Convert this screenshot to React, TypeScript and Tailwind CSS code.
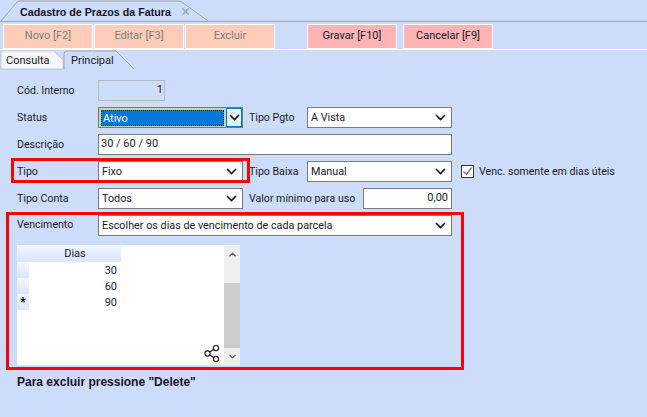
import React from "react";
import { ChevronDown, ChevronUp, X } from "lucide-react";

const Chevron = () => (
  <svg width="11" height="7" viewBox="0 0 11 7" className="shrink-0">
    <path d="M1 1l4.5 4.5L10 1" fill="none" stroke="#111" strokeWidth="1.6" />
  </svg>
);

const Label = ({ children, className = "" }: { children: React.ReactNode; className?: string }) => (
  <span className={`whitespace-nowrap pt-[1px] text-[10.6px] text-[#1a1a2a] ${className}`}>{children}</span>
);

const Select = ({ value, className = "" }: { value: string; className?: string }) => (
  <div className={`flex h-[21px] items-center justify-between border border-[#7a7a7a] bg-white pl-[3px] pr-[5px] ${className}`}>
    <span className="pt-[1px] text-[10.8px] text-[#1a1a2a]">{value}</span>
    <Chevron />
  </div>
);

const ActionButton = ({ label, tone }: { label: string; tone: "off" | "on" }) => (
  <div
    className={
      tone === "off"
        ? "flex h-[25px] w-[90px] items-center justify-center border border-white bg-[#fdcdb9] text-[11px] text-[#7d7d7d]"
        : "flex h-[25px] w-[90px] items-center justify-center border border-white bg-[#feb4b4] text-[11px] text-[#1a1a2a]"
    }
  >
    {label}
  </div>
);

const GridRow = ({ value, mark }: { value: string; mark?: boolean }) => (
  <div className="flex h-4 w-[104px]">
    <div className="flex w-3 items-center justify-center bg-gradient-to-b from-[#f2f6fe] to-[#dce6fa] text-[12px] font-bold leading-none text-black">
      {mark ? "*" : ""}
    </div>
    <div className="flex-1 pr-[4px] pt-[1px] text-right text-[11px] leading-4 text-[#1a1a2a]">{value}</div>
  </div>
);

export default function App() {
  return (
    <div className="relative h-[417px] w-[647px] overflow-hidden bg-[#cddcf9] font-['Roboto',sans-serif]">
      {/* aba do topo */}
      <div className="relative h-[22px] border-b border-[#a0a4ab]">
        <svg width="212" height="22" className="absolute left-0 top-0">
          <path d="M1 21L17 2Q18 1 20 1H178Q181 1 183 3L208 21" fill="none" stroke="#a0a4ab" />
        </svg>
        <div className="absolute left-[20px] top-[3px] font-['Liberation_Sans',sans-serif] text-[10.7px] font-bold leading-[18px] text-[#14142a]">
          Cadastro de Prazos da Fatura
        </div>
        <X size={11} strokeWidth={3} className="absolute left-[180px] top-[6px] text-[#a0a4ab]" />
      </div>

      {/* barra de botões */}
      <div className="flex h-[28px] items-start border-b border-white pl-[3px] pt-[2px]">
        <div className="flex gap-[1px]">
          <ActionButton label="Novo [F2]" tone="off" />
          <ActionButton label="Editar [F3]" tone="off" />
          <ActionButton label="Excluir" tone="off" />
        </div>
        <div className="ml-[32px] flex gap-[6px]">
          <ActionButton label="Gravar [F10]" tone="on" />
          <ActionButton label="Cancelar [F9]" tone="on" />
        </div>
      </div>

      {/* abas internas */}
      <div className="relative h-[20px]">
        <svg width="140" height="20" className="absolute left-0 top-0">
          <path d="M1 19V3Q1 1 3 1H54L63 10V19Z" fill="#f4f6f9" stroke="#c4cad3" />
          <path d="M64 19V4Q64 1 67 1H116L134 19" fill="#cddcf9" stroke="#a0a4ab" />
        </svg>
        <span className="absolute left-[6px] top-[2px] text-[11px] leading-[18px] text-[#1a1a2a]">Consulta</span>
        <span className="absolute left-[71px] top-[2px] text-[11px] leading-[18px] text-[#1a1a2a]">Principal</span>
      </div>

      {/* formulário */}
      <div className="flex flex-col gap-[6px] pt-[10px]">
        <div className="flex h-[21px] items-center pl-[17px]">
          <Label className="w-[81px]">Cód. Interno</Label>
          <div className="flex h-[21px] w-[67px] items-center justify-end border border-[#b4b8bd] pr-[1px] text-[11px] text-[#1a1a2a]">
            1
          </div>
        </div>

        <div className="flex h-[21px] items-center pl-[17px]">
          <Label className="w-[81px]">Status</Label>
          <div className="flex h-[21px] w-[145px] border border-[#6f7f6f] bg-[#c3d6b4] pl-[2px] pt-[2px]">
            <div className="h-[16px] w-[123px] border border-dotted border-[#3a2c10] bg-[#0078d7] pl-[1px] text-[11px] leading-[15px] text-white">
              Ativo
            </div>
            <div className="-mt-[2px] ml-[2px] flex h-[19px] flex-1 items-center justify-center border border-[#0078d7] bg-[#e5f1fb]">
              <Chevron />
            </div>
          </div>
          <Label className="ml-[6px] w-[58px]">Tipo Pgto</Label>
          <Select value="A Vista" className="w-[145px]" />
        </div>

        <div className="flex h-[21px] items-center pl-[17px]">
          <Label className="w-[81px]">Descrição</Label>
          <div className="flex h-[21px] w-[354px] items-center border border-[#7a7a7a] bg-white pl-[2px] text-[11px] text-[#1a1a2a]">
            30 / 60 / 90
          </div>
        </div>

        <div className="flex h-[21px] items-center pl-[17px]">
          <Label className="w-[81px]">Tipo</Label>
          <Select value="Fixo" className="w-[145px]" />
          <Label className="ml-[6px] w-[58px]">Tipo Baixa</Label>
          <Select value="Manual" className="w-[145px]" />
          <div className="ml-[9px] flex items-center gap-[5px]">
            <div className="flex h-[13px] w-[13px] items-center justify-center border border-[#333] bg-white">
              <svg width="11" height="11" viewBox="0 0 11 11">
                <path d="M1.5 5.5l3 3 5-7" fill="none" stroke="#777" strokeWidth="1.3" />
              </svg>
            </div>
            <Label>Venc. somente em dias úteis</Label>
          </div>
        </div>

        <div className="flex h-[21px] items-center pl-[17px]">
          <Label className="w-[81px]">Tipo Conta</Label>
          <Select value="Todos" className="w-[145px]" />
          <Label className="ml-[6px] w-[114px]">Valor mínimo para uso</Label>
          <div className="flex h-[21px] w-[89px] items-center justify-end border border-[#7a7a7a] bg-white pr-[3px] text-[11px] text-[#1a1a2a]">
            0,00
          </div>
        </div>

        <div className="flex h-[21px] items-center pl-[17px]">
          <Label className="w-[81px] -translate-y-[1px]">Vencimento</Label>
          <Select value="Escolher os dias de vencimento de cada parcela" className="w-[354px]" />
        </div>
      </div>

      {/* grade de dias */}
      <div className="relative ml-[17px] mt-[9px] flex h-[120px] w-[223px] bg-white">
        <div className="flex-1">
          <div className="flex h-[17px] w-[104px] items-center justify-center bg-gradient-to-b from-[#f2f6fe] to-[#dae5fa] pl-[12px] pt-[2px] text-[11px] text-[#1a1a2a]">
            Dias
          </div>
          <GridRow value="30" />
          <GridRow value="60" />
          <GridRow value="90" mark />
        </div>
        <div className="flex w-[16px] flex-col items-center bg-[#efefef]">
          <div className="flex h-[38px] w-full items-start justify-center pt-[4px]">
            <ChevronUp size={11} strokeWidth={3} className="text-[#606060]" />
          </div>
          <div className="h-[65px] w-full bg-[#cdcdcd]" />
          <div className="flex w-full flex-1 items-center justify-center">
            <ChevronDown size={11} strokeWidth={3} className="text-[#606060]" />
          </div>
        </div>
        <svg width="16" height="17" viewBox="0 0 16 17" className="absolute left-[187px] top-[100px]">
          <circle cx="3.5" cy="8.5" r="2.6" fill="none" stroke="#222" strokeWidth="1.2" />
          <circle cx="12" cy="3" r="2.6" fill="none" stroke="#222" strokeWidth="1.2" />
          <circle cx="12" cy="14" r="2.6" fill="none" stroke="#222" strokeWidth="1.2" />
          <path d="M5.7 7L9.8 4.4M5.7 10L9.8 12.6" stroke="#222" strokeWidth="1.2" />
        </svg>
      </div>

      <div className="ml-[17px] mt-[9px] font-['Liberation_Sans',sans-serif] text-[12px] font-bold leading-[16px] text-[#14142a]">
        Para excluir pressione "Delete"
      </div>

      {/* marcações em vermelho */}
      <div className="pointer-events-none absolute left-[11px] top-[158px] h-[25px] w-[239px] border-[3px] border-[#fe0000]" />
      <div className="pointer-events-none absolute left-[6px] top-[212px] h-[158px] w-[458px] border-[3px] border-[#fe0000]" />
    </div>
  );
}
